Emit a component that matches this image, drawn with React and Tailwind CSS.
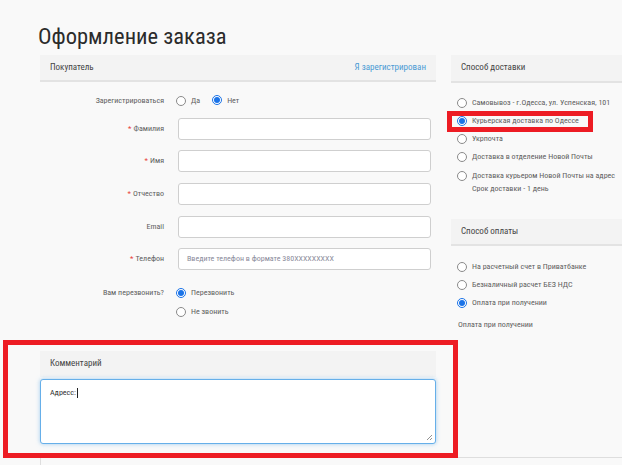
import React from "react";

const font = { fontFamily: "Roboto, 'Noto Sans', sans-serif" };

function Radio({ checked }) {
  return checked ? (
    <span className="inline-flex h-[10px] w-[10px] shrink-0 items-center justify-center rounded-full border border-[#1a73e8] bg-white">
      <span className="h-[6px] w-[6px] rounded-full bg-[#1a73e8]" />
    </span>
  ) : (
    <span className="inline-block h-[10px] w-[10px] shrink-0 rounded-full border border-[#8a8a8a] bg-white" />
  );
}

function RadioRow({ checked, children, className = "" }) {
  return (
    <div className={"flex h-[18px] items-center gap-[5px] whitespace-nowrap text-[8px] text-[#606060] " + className}>
      <Radio checked={checked} />
      <span>{children}</span>
    </div>
  );
}

function Field({ label, required, mt, placeholder }) {
  return (
    <div className={"flex items-center " + mt}>
      <div className="w-[124px] text-right text-[8px] text-[#606060]">
        {required && <span className="mr-[2px] text-[#e8413c]">*</span>}
        {label}
      </div>
      <div className="ml-[14px] flex h-[22px] w-[253px] items-center rounded-[3px] border border-[#cfcfcf] bg-white px-[8px] text-[8px] text-[#8a8a9a]">
        {placeholder}
      </div>
    </div>
  );
}

export default function App() {
  return (
    <div className="relative h-[465px] w-[622px] overflow-hidden bg-[#f9f9f9] font-stretch-[80%]" style={font}>
      <div className="pl-[38px] pt-[21px] text-[22.5px] leading-[30px] text-[#2b2b2b] font-stretch-[75%]">Оформление заказа</div>
      <div className="mt-[4px] flex gap-[15px] pl-[40px]">
        {/* Left column */}
        <div className="w-[396px]">
          <div className="flex h-[27px] items-center justify-between border-b-2 border-[#e3e3e3] bg-[#f3f3f3] px-[10px] text-[9px]">
            <span className="text-[#444]">Покупатель</span>
            <span className="text-[#4a9ad4]">Я зарегистрирован</span>
          </div>
          <div className="pt-[12px]">
            <div className="flex h-[14px] items-center">
              <div className="w-[124px] text-right text-[8px] text-[#606060]">Зарегистрироваться</div>
              <div className="ml-[12px] flex items-center gap-[5px] text-[8px] text-[#606060]">
                <Radio />
                <span>Да</span>
                <span className="ml-[7px]"><Radio checked /></span>
                <span>Нет</span>
              </div>
            </div>
            <Field label="Фамилия" required mt="mt-[10px]" />
            <Field label="Имя" required mt="mt-[10px]" />
            <Field label="Отчество" required mt="mt-[11px]" />
            <Field label="Email" mt="mt-[11px]" />
            <Field label="Телефон" required mt="mt-[10px]" placeholder="Введите телефон в формате 380XXXXXXXXX" />
            <div className="mt-[14px] flex">
              <div className="w-[124px] pt-[3px] text-right text-[8px] text-[#606060]">Вам перезвонить?</div>
              <div className="ml-[12px]">
                <RadioRow checked>Перезвонить</RadioRow>
                <RadioRow className="mt-[1px]">Не звонить</RadioRow>
              </div>
            </div>
          </div>
          <div className="mt-[30px] flex h-[26px] items-center bg-[#f3f3f3] px-[10px] text-[9px] text-[#444]">Комментарий</div>
          <div className="relative mt-[2px] h-[65px] w-[396px] rounded-[3px] border border-[#66afe9] bg-white px-[9px] py-[7px] text-[8px] text-[#333] shadow-[0_0_4px_rgba(102,175,233,0.6)]">
            Адресс:<span className="ml-[1px] inline-block h-[10px] w-[1px] bg-[#222] align-middle" />
            <svg className="absolute bottom-[2px] right-[2px]" width="8" height="8" viewBox="0 0 8 8">
              <path d="M7 2 L2 7 M7 5 L5 7" stroke="#777" strokeWidth="0.8" />
            </svg>
          </div>
        </div>
        {/* Right column */}
        <div className="w-[180px]">
          <div className="flex h-[28px] items-center border-b-2 border-[#e3e3e3] bg-[#f3f3f3] px-[10px] text-[9px] text-[#444]">Способ доставки</div>
          <div className="pl-[6px] pt-[11px]">
            <RadioRow>Самовывоз - г.Одесса, ул. Успенская, 101</RadioRow>
            <RadioRow checked>Курьерская доставка по Одессе</RadioRow>
            <RadioRow>Укрпочта</RadioRow>
            <RadioRow>Доставка в отделение Новой Почты</RadioRow>
            <div className="flex items-start gap-[5px] whitespace-nowrap pt-[3px] text-[8px] leading-[13px] text-[#606060]">
              <span className="mt-[1.5px]"><Radio /></span>
              <span>Доставка курьером Новой Почты на адрес<br />Срок доставки - 1 день</span>
            </div>
          </div>
          <div className="mt-[24px] flex h-[27px] items-center border-b-2 border-[#e3e3e3] bg-[#f3f3f3] px-[10px] text-[9px] text-[#444]">Способ оплаты</div>
          <div className="pl-[6px] pt-[12px]">
            <RadioRow>На расчетный счет в Приватбанке</RadioRow>
            <RadioRow>Безналичный расчет БЕЗ НДС</RadioRow>
            <RadioRow checked>Оплата при получении</RadioRow>
          </div>
          <div className="mt-[7px] pl-[7px] text-[8px] text-[#606060]">Оплата при получении</div>
        </div>
      </div>
      {/* lower panel edge */}
      <div className="absolute left-[40px] top-[457px] h-[20px] w-[600px] border-l border-t border-[#dedede] bg-[#f9f9f9]" />
      {/* annotation boxes */}
      <div className="absolute left-[3px] top-[340px] h-[118px] w-[455px] border-[5px] border-[#ed1c24]" />
      <div className="absolute left-[447px] top-[111px] h-[21px] w-[146px] border-[5px] border-[#ed1c24]" />
    </div>
  );
}
